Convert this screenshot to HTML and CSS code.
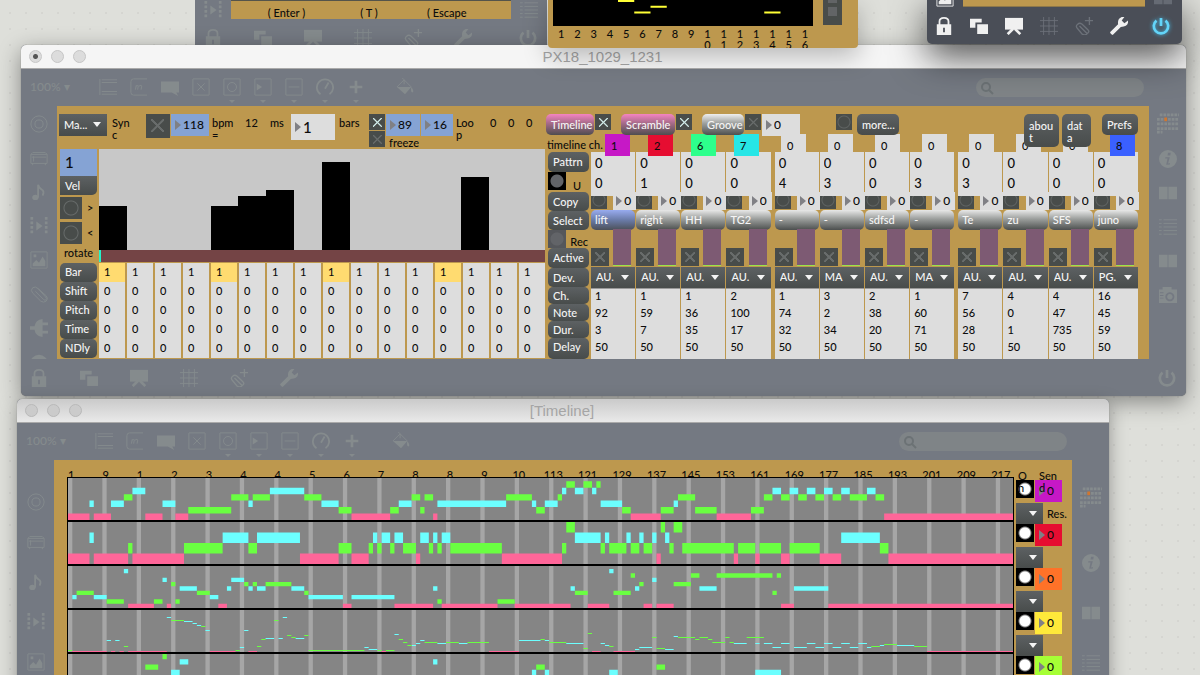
FILE: index.html
```html
<!DOCTYPE html>
<html lang="en">
<head>
<meta charset="utf-8">
<title>PX18_1029_1231</title>
<link rel="stylesheet" href="styles.css">
</head>
<body>
<svg class="sprite" aria-hidden="true">
  <symbol id="object" viewBox="0 0 20 20"><path d="M1 1v18M3 2h17M3 5h17M3 15h17M3 18h17"/></symbol>
  <symbol id="message" viewBox="0 0 20 20"><path d="M19 1H4Q1 1 1 4v12q0 3 3 3h15M6 13l1-5M7 9q3-2 2 1l-.5 3M10 9q3-2 3 0l-.7 4"/></symbol>
  <symbol id="comment" viewBox="0 0 20 20"><path class="solid" d="M0 4h20v12h-3l2 4-7-4H0z"/></symbol>
  <symbol id="toggle" viewBox="0 0 20 20"><path d="M1 1h18v18H1zM6 6l8 8M14 6l-8 8"/></symbol>
  <symbol id="bang" viewBox="0 0 20 20"><path d="M1 1h18v18H1z"/><circle cx="10" cy="10" r="5"/></symbol>
  <symbol id="number" viewBox="0 0 20 20"><path d="M1 1h18v18H1z"/><path class="solid" d="M3 6l6 4-6 4z"/></symbol>
  <symbol id="slider" viewBox="0 0 20 20"><path d="M1 1h18v18H1zM4 10h12"/></symbol>
  <symbol id="dial" viewBox="0 0 20 20"><path class="heavy" d="M5 18A9 9 0 1 1 15 18M10 12l4-7"/></symbol>
  <symbol id="plus" viewBox="0 0 20 20"><path class="bold" d="M10 3v14M3 10h14"/></symbol>
  <symbol id="bucket" viewBox="0 0 20 20"><path class="solid" d="M1 10h16l-7 8zM17 10q4 5 1 6-2 0-1-6z"/><path d="M1 10l8-8 8 8M9 2L7 0M9 2v5"/></symbol>
  <symbol id="target" viewBox="0 0 20 20"><circle cx="10" cy="10" r="9"/><circle cx="10" cy="10" r="4.500"/></symbol>
  <symbol id="drawer" viewBox="0 0 20 20"><path d="M1 6h18v10H1zM1 6l2-2h14l2 2M4 8v6M2 9h16M3 16v2M17 16v2"/></symbol>
  <symbol id="note" viewBox="0 0 20 20"><path class="heavy" d="M9 16V2q1 4 5 6 2 2 0 6"/><ellipse class="solid" cx="6" cy="16" rx="3.500" ry="3"/></symbol>
  <symbol id="film" viewBox="0 0 20 20"><path class="solid" d="M7 5l7 5-7 5z"/><path class="dash" d="M2 0v20M18 0v20"/></symbol>
  <symbol id="image" viewBox="0 0 20 20"><path d="M1 1h18v18H1z"/><path class="solid" d="M3 17v-3l4-4 3 3 4-7 3 5v6zM4 4h3v3H4z"/></symbol>
  <symbol id="clip" viewBox="0 0 20 20"><path d="M6 7l9 9q2 2 3 0 1-1-1-3L9 4Q6 1 3 3 0 6 3 9l9 9q3 2 6 0 3-3 0-6L9 4"/></symbol>
  <symbol id="plug" viewBox="0 0 20 20"><path class="solid" d="M14 0v20q-8-1-9-8H0V8h5q1-7 9-8zM14 4h6v3h-6zM14 13h6v3h-6z"/></symbol>
  <symbol id="dome" viewBox="0 0 20 20"><path class="solid" d="M0 12a10 10 0 0 1 20 0l-7 3v-6h-6v6z"/></symbol>
  <symbol id="lock" viewBox="0 0 20 20"><path class="heavy" d="M5 9V5q0-4 5-4t5 4v4"/><path class="solid" fill-rule="evenodd" d="M2 8h16v12H2zM9 12v5h2v-5z"/></symbol>
  <symbol id="layers" viewBox="0 0 20 20"><path class="solid" d="M0 2h13v4H6v6H0zM8 8h12v11H8z"/></symbol>
  <symbol id="easel" viewBox="0 0 20 20"><path class="solid" d="M0 1h20v13H0z"/><path class="bold" d="M9 13l-6 6M11 13l6 6"/></symbol>
  <symbol id="grid" viewBox="0 0 20 20"><path d="M4 0v20M10 0v20M16 0v20M0 4h20M0 10h20M0 16h20"/></symbol>
  <symbol id="clipadd" viewBox="0 0 20 20"><path class="mid" d="M5 10l7 7q2 2 3 0 1-1-1-3L8 8Q5 6 3 8 0 10 3 13l5 6q4 2 6-1M16 0v9M11 4h9"/></symbol>
  <symbol id="wrench" viewBox="0 0 20 20"><path class="solid" d="M0 17l9-9q-1-6 4-8h3l-3 4 3 3 4-3q1 7-8 7l-9 9q-2 0-3-3z"/></symbol>
  <symbol id="power" viewBox="0 0 20 20"><path class="bold" d="M10 1v9M5 4a8 8 0 1 0 10 0"/></symbol>
  <symbol id="keys" viewBox="0 0 24 22"><path class="cells" d="M3 2h21M0 7h24M0 12h24M0 17h24M0 21h6"/><path fill="#d0762f" class="hot" d="M8 5h3v4H8z"/></symbol>
  <symbol id="info" viewBox="0 0 20 20"><path class="solid" fill-rule="evenodd" d="M10 0a10 10 0 1 1 0 20 10 10 0 0 1 0-20zM10 3h3l-.5 3h-3zM7 8h5l-2 7 2-.5v1.500l-4 .5 1.500-7H7z"/></symbol>
  <symbol id="book" viewBox="0 0 20 20"><path class="solid" d="M0 3h9.500v14H0zM10.500 3H20v14h-9.500z"/></symbol>
  <symbol id="list" viewBox="0 0 20 20"><path d="M0 2h3M5 2h15M0 6h3M5 6h15M0 10h3M5 10h15M0 14h3M5 14h15M0 18h3M5 18h15"/></symbol>
  <symbol id="camera" viewBox="0 0 20 20"><path class="solid" fill-rule="evenodd" d="M0 4h4V1h10v3h6v15H0zM12 7a5 5 0 1 0 .1 0zM12 9a3 3 0 1 0 .1 0zM1 7v1h4V7zM1 10v1h4v-1zM1 13v1h4v-1z"/></symbol>
</svg>

<main class="desktop">
  <section class="win keys-win" aria-label="Keyboard shortcuts">
    <div class="keys-row">
      <div class="keys-side"><button class="icon" aria-label="Media"><svg><use href="#film"/></svg></button></div>
      <div class="keys-patch"><span>( Enter )</span><span>( T )</span><span>( Escape</span></div>
      <div class="keys-side"><button class="icon" aria-label="List"><svg><use href="#list"/></svg></button></div>
    </div>
    <div class="bottombar" data-bottom></div>
  </section>

  <section class="win px-win" aria-label="PX18_1029_1231">
    <header class="title title-light"><i class="light dot"></i><i class="light"></i><i class="light"></i><h1>PX18_1029_1231</h1></header>
    <div class="toolbar" data-toolbar></div>
    <div class="middle">
      <nav class="rail" data-rail="target drawer note film image clip plug dome"></nav>
      <div class="patch px-patch">
        <div class="left">
          <div class="topbar">
            <div class="pick pick-mode"><select aria-label="Mode"><option>Ma...</option></select></div>
            <span>Syn<br>c</span>
            <input type="checkbox" class="x x-24" aria-label="Sync">
            <label class="num blue w38"><input value="118" aria-label="Tempo"></label>
            <span>bpm<br>=</span><span>12</span><span>ms</span>
            <label class="num big"><input value="1" aria-label="Bars"></label>
            <span>bars</span>
            <div class="stack"><input type="checkbox" class="x" checked aria-label="Loop"><input type="checkbox" class="x" id="freeze"></div>
            <div class="loop">
              <label class="num blue"><input value="89" aria-label="Loop start"></label>
              <label class="num blue"><input value="16" aria-label="Loop length"></label>
              <label class="freeze" for="freeze">freeze</label>
            </div>
            <span>Loo<br>p</span><span>0</span><span>0</span><span>0</span>
          </div>
          <div class="sequencer">
            <div class="side">
              <input class="bank" value="1" aria-label="Bank">
              <button class="btn vel">Vel</button>
              <div class="rot"><button class="ring r22" aria-label="Rotate right"></button>&gt;</div>
              <div class="rot"><button class="ring r22" aria-label="Rotate left"></button>&lt;</div>
              <span class="rotate">rotate</span>
              <button class="btn">Bar</button><button class="btn">Shift</button><button class="btn">Pitch</button><button class="btn">Time</button><button class="btn">NDly</button>
            </div>
            <div class="steps">
              <div class="graph" id="graph"></div>
              <div class="progress"></div>
              <div class="cells" id="cells"></div>
            </div>
          </div>
        </div>
        <div class="right">
          <div class="modes">
            <button class="btn pink w48">Timeline</button><input type="checkbox" class="x" checked aria-label="Timeline on">
            <button class="btn pink w54">Scramble</button><input type="checkbox" class="x" checked aria-label="Scramble on">
            <button class="btn grey w42">Groove</button><input type="checkbox" class="x" aria-label="Groove on">
            <label class="num w38"><input value="0" aria-label="Groove amount"></label>
            <button class="ring r16" aria-label="Trigger"></button><button class="btn w42">more...</button>
            <div class="extras"><button class="btn tall w35">abou<br>t</button><button class="btn tall w29">dat<br>a</button><button class="btn w36">Prefs</button></div>
          </div>
          <div class="channels"><span class="chlabel">timeline ch.</span><div class="chs four" id="chA"></div><div class="chs eight" id="chB"></div></div>
          <div class="mixer">
            <div class="labels">
              <button class="btn">Pattrn</button>
              <div class="knobrow"><button class="knob on" aria-label="Update"></button><span>U</span></div>
              <button class="btn">Copy</button><button class="btn">Select</button>
              <div class="knobrow"><button class="knob" aria-label="Record"></button><span>Rec</span></div>
              <button class="btn">Active</button><button class="btn">Dev.</button><button class="btn">Ch.</button><button class="btn">Note</button><button class="btn">Dur.</button><button class="btn">Delay</button>
            </div>
            <div class="strips" id="strips"></div>
          </div>
        </div>
      </div>
      <nav class="rail right-rail" data-rail="keys info book list book camera"></nav>
    </div>
    <div class="bottombar" data-bottom></div>
  </section>

  <section class="win time-win" aria-label="Timeline">
    <header class="title title-dim"><i class="light"></i><i class="light"></i><i class="light"></i><h1>[Timeline]</h1></header>
    <div class="toolbar" data-toolbar></div>
    <div class="middle">
      <nav class="rail" data-rail="target drawer note film image clip"></nav>
      <div class="patch time-patch">
        <div class="score">
          <div class="ruler" id="ruler"></div>
          <div class="rows" id="rows"></div>
        </div>
        <div class="sends" id="sends"><span class="on-label">O<br>n</span><span class="send-label">Sen<br>d</span><span class="res-label">Res.</span></div>
      </div>
      <nav class="rail right-rail" data-rail="keys info book list"></nav>
    </div>
  </section>

  <section class="win groove-win" aria-label="Groove">
    <div class="groove-top"><svg class="groove-graph" viewBox="0 0 16 25" preserveAspectRatio="none"><path d="M4 1h1M5 12h1M6 6.500h1M13 12h1"/></svg><div class="groove-slots"></div></div>
    <div class="groove-nums" id="gnums"></div>
  </section>

  <section class="win dark-win" aria-label="Patcher">
    <div class="dark-row"><svg class="dark-icon"><use href="#image"/></svg><div class="dark-patch"></div><svg class="dark-icon dim"><use href="#book"/></svg></div>
    <div class="bottombar" data-bottom></div>
  </section>
</main>
<script src="script.js"></script>
</body>
</html>
```
FILE: styles.css
```css
* { box-sizing: border-box; }
body { margin: 0; background: #dedfda; font: 500 11px/12px Lato, "Open Sans", sans-serif; color: #0c0c0c; }
button, input, select { font: inherit; color: inherit; border: 0; margin: 0; padding: 0; border-radius: 0; background: none; min-width: 0; }
.sprite { position: absolute; width: 0; height: 0; }
.desktop {
  position: relative; height: 100vh; overflow: hidden;
  background: radial-gradient(circle at 10px 13px, #bfc0bb 0, transparent 1px) 0 0 / 16px 16px #dedfda;
}
.win { position: absolute; background: #747982; }

svg path, svg circle { fill: none; stroke: currentColor; stroke-width: 1; }
svg .solid { fill: currentColor; stroke: none; }
svg .mid { stroke-width: 1.500; }
svg .heavy { stroke-width: 2; }
svg .bold { stroke-width: 3; }
svg .dash { stroke-width: 3; stroke-dasharray: 3 2; }
svg .cells { stroke-width: 3; stroke-dasharray: 3 1; }
svg .hot { fill: #d0762f; stroke: none; }
.icon { display: block; width: 18px; height: 18px; color: #858b8d; flex: none; }
.icon svg { display: block; width: 100%; height: 100%; }

.title { display: flex; align-items: center; gap: 9px; height: 24px; padding-left: 8px; border-radius: 5px 5px 0 0; border-bottom: 1px solid #aaa; }
.title-light { background: #f5f5f5; }
.title-dim { background: linear-gradient(#cacaca, #e9e9e9); }
.title h1 { flex: 1; margin: 0 100px 0 0; padding-left: 24px; text-align: center; font: 15px/22px "Liberation Sans", Arial, sans-serif; color: #a5a5a5; }
.light { width: 13px; height: 13px; border-radius: 50%; background: #dcdcdc; border: 1px solid #c6c6c6; flex: none; }
.title-dim .light { background: #cbcbcb; border-color: #b9b9b9; }
.dot { background: radial-gradient(#555 0, #555 2px, #dcdcdc 3px); }

.toolbar { display: flex; align-items: center; height: 37px; padding: 0 42px 1px 9px; color: #858b8d; }
.zoom { width: 69px; font-size: 12px; }
.tools { display: flex; gap: 13px; flex: 1; }
.tool { position: relative; }
.tool.more::after { content: ""; position: absolute; left: 6px; bottom: -7px; border: 3px solid transparent; border-top-color: #848a8c; border-bottom: 0; }
.tool.last { margin-left: 18px; }
.search { position: relative; width: 168px; height: 19px; }
.search input { width: 100%; height: 100%; border-radius: 10px; background: #7f8487; display: block; }
.search svg { position: absolute; left: 4px; top: 3px; width: 14px; height: 14px; color: #6c7275; }

.middle { display: grid; grid-template-columns: 36px minmax(0, 1fr) 37px; }
.rail { display: flex; flex-direction: column; align-items: center; gap: 16px; padding-top: 9px; height: 253px; overflow: hidden; }
.right-rail { padding-top: 6px; }
.right-rail .icon:first-child { width: 22px; height: 22px; }
.bottombar { display: flex; align-items: center; gap: 32px; height: 37px; padding: 0 10px 0 9px; }
.bottombar .icon:last-child { margin-left: auto; }
.patch { background: #bd984e; }

/* shared controls */
.btn { display: block; padding: 0 0 0 5px; height: 20px; text-align: left; color: #f5f5f5; background: linear-gradient(#5d6163, #484c4b); border-radius: 5px; white-space: nowrap; flex: none; }
.pink { background: linear-gradient(#f584c1, #a46a88 45%, #4f4d50); }
.grey { background: linear-gradient(#efefef, #9c9f9d 45%, #4e504f); }
.tall { height: 33px; line-height: 12px; }
.w29 { width: 29px; } .w35 { width: 35px; } .w36 { width: 36px; } .w38 { width: 38px; } .w42 { width: 42px; } .w48 { width: 48px; } .w54 { width: 54px; }
.x { appearance: none; width: 16px; height: 16px; color: #686c6b; display: block; flex: none;
  background:
    linear-gradient(45deg, transparent 44%, currentColor 45%, currentColor 55%, transparent 56%) center / 56% 56% no-repeat,
    linear-gradient(-45deg, transparent 44%, currentColor 45%, currentColor 55%, transparent 56%) center / 56% 56% no-repeat,
    #484c4a; }
.x:checked { color: #cfe9e6; }
.x-24 { width: 24px; height: 24px; }
.ring { background: radial-gradient(circle, transparent 0, transparent 5px, #5f6362 6px, transparent 7px) #484c4a; flex: none; }
.r16 { width: 16px; height: 16px; }
.r22 { width: 22px; height: 22px; background: radial-gradient(circle, transparent 0, transparent 6px, #666a69 7px, transparent 8px) #484c4a; }
.num { display: flex; align-items: center; height: 22px; padding-left: 4px; background: #ddd; flex: none; }
.num::before { content: ""; border: 5px solid transparent; border-left: 6px solid #808085; border-right: 0; }
.num input { flex: 1; width: 0; padding: 0 0 1px 2px; font-size: 12px; }
.blue { background: #85a3d4; }
.big { width: 44px; height: 26px; }
.big input { font-size: 15px; }
.pick { position: relative; height: 21px; color: #f5f5f5; background: linear-gradient(#5d6163, #484c4b); }
.pick select { appearance: none; width: 100%; height: 100%; padding: 0 14px 1px 5px; overflow: hidden; display: block; }
.pick::after { content: ""; position: absolute; right: 6px; top: 8px; border: 4px solid transparent; border-top: 5px solid #f4f4f4; border-bottom: 0; pointer-events: none; }

/* main window */
.px-win { left: 21px; right: 14px; top: 45px; border-radius: 5px; box-shadow: 0 6px 22px rgba(0,0,0,.4), 0 0 1px #777; }
.px-patch { display: grid; grid-template-columns: 489fr 603fr; }
.topbar { display: grid; grid-template-columns: 53px 34px 25px 41px 33px 25px 21px 48px 30px 17px 70px 34px 18px 18px 20px; align-items: start; height: 43px; padding: 8px 0 0 2px; }
.topbar > span { padding-top: 3px; }
.pick-mode { width: 48px; height: 22px; }
.stack { display: grid; gap: 1px; }
.loop { display: grid; grid-template-columns: 34px 32px; gap: 1px; }
.freeze { grid-column: 1 / 3; padding-left: 3px; }
.sequencer { display: grid; grid-template-columns: 37px minmax(0, 1fr); gap: 2px; padding: 0 1px 0 3px; }
.side { display: flex; flex-direction: column; }
.bank { height: 27px; width: 100%; padding: 0 0 1px 5px; background: #85a3d4; font-size: 15px; }
.vel { height: 19px; border-radius: 0 0 5px 0; }
.rot { display: flex; gap: 5px; align-items: center; height: 25px; }
.rotate { height: 18px; padding: 0 0 0 4px; line-height: 16px; }
.side .btn:not(.vel) { height: 19px; padding-bottom: 1px; }
.steps { display: flex; flex-direction: column; }
.graph { display: grid; grid-template-columns: repeat(16, 1fr); align-items: end; height: 101px; background: #c8c8c8; }
.graph i { background: #000; }
.progress { height: 12px; background: #744445; border-left: 2px solid #25f3c9; }
.cells { display: grid; grid-template-columns: repeat(16, 1fr); gap: 0 2px; margin-top: 1px; }
.cells div { display: grid; grid-auto-rows: 19px; background: #ddd; }
.cells input { width: 100%; padding: 0 0 2px 5px; }
.cells .beat { background: #ffdb70; }

.modes { display: flex; align-items: flex-start; height: 28px; padding: 8px 11px 0 0; position: relative; z-index: 2; }
.modes .btn { height: 21px; }
.modes .x { margin: 0 10px 0 1px; }
.modes .grey + .x { margin-right: 1px; }
.modes .ring { margin: 0 5px 0 36px; }
.modes .extras { display: flex; gap: 3px; margin-left: auto; }
.modes .tall { height: 33px; padding-top: 2px; }
.extras .btn:last-child { margin-left: 8px; }
.channels { display: flex; height: 18px; position: relative; z-index: 1; }
.chlabel { width: 59px; padding: 5px 0 0 1px; white-space: nowrap; }
.chs { display: flex; }
.four { gap: 18px; } .eight { gap: 22px; margin-left: 22px; }
.chs input { width: 25px; height: 22px; padding-left: 6px; background: #ddd; }
.mixer { display: grid; grid-template-columns: 41px minmax(0, 1fr); gap: 2px; padding: 0 11px 0 2px; }
.labels { display: grid; grid-template-rows: 20px 20px 19px 19px 18px 20px 19px 17px 17px 17px 21px; }
.labels .btn { height: 100%; }
.labels .btn:last-child { padding-bottom: 3px; }
.knobrow { display: flex; align-items: flex-end; gap: 4px; }
.knobrow span { margin-left: auto; padding-right: 1px; }
.knobrow .on + span { padding-right: 8px; }
.knob { width: 18px; height: 18px; align-self: start; background: radial-gradient(circle, #626468 0, #626468 6px, #55575b 7px); }
.knob.on { background: radial-gradient(circle, #626468 0, #626468 6px, #000 7px); }
.strips { display: grid; grid-template-columns: repeat(3, minmax(0, 1fr)); gap: 4px; }
.group { display: grid; grid-template-columns: repeat(4, minmax(0, 1fr)); gap: 1px; }
.strip { display: flex; flex-direction: column; }
.pat { display: grid; grid-auto-rows: 20px; background: #ddd; font-size: 13px; }
.pat input, .vals input { width: 100%; padding-left: 4px; }
.pat input { padding-top: 2px; }
.vals input { padding-bottom: 3px; }
.copy { display: flex; justify-content: space-between; align-items: flex-end; height: 18px; background: linear-gradient(#ddd 4px, #bd984e 4px); margin-right: -1px; }
.copy .ring { width: 16px; height: 13px; margin-bottom: 1px; background-image: radial-gradient(circle at 8px 4px, transparent 0, transparent 5px, #5f6362 6px, transparent 7px); }
.copy .num { width: 23px; height: 18px; padding-left: 3px; }
.strip .btn { width: 100%; padding: 0 0 1px 4px; background: linear-gradient(#e8e8e8, #9b9e9c 45%, #4c4f4e); }
.strip .btn.sel { background: linear-gradient(#98abef, #6a7ba8 50%, #4c5058); }
.meter { display: flex; justify-content: space-between; align-items: flex-end; height: 37px; padding: 0 4px 1px 0; }
.meter .x { width: 18px; height: 18px; }
.meter i { width: 18px; height: 37px; background: #7d5a73; border-bottom: 1px solid #9be34a; }
.vals { display: grid; grid-auto-rows: 17px; align-content: start; height: 71px; background: #ddd; border-top: 1px solid #999; }

/* timeline window */
.time-win { left: 17px; right: 91px; top: 399px; bottom: -40px; border-radius: 5px; box-shadow: 0 6px 18px rgba(0,0,0,.35), 0 0 1px #777; }
.time-win .middle { grid-template-columns: 37px minmax(0, 1fr) 37px; }
.time-win .rail { gap: 22px; padding-top: 33px; height: auto; }
.time-win .right-rail { gap: 32px; padding-top: 26px; }
.time-win .right-rail .icon:first-child { margin-bottom: 14px; }
.time-patch { display: grid; grid-template-columns: minmax(0, 1fr) 58px; overflow: hidden; }
.score { padding-left: 13px; min-width: 0; }
.ruler { display: grid; grid-template-columns: repeat(28, minmax(0, 1fr)); height: 17px; padding-top: 9px; margin-left: -13px; margin-right: -4px; text-align: center; }
.rows { position: relative; border: 1px solid #000; border-bottom: 0; }
.rows svg { display: block; width: 100%; height: 44px; background: #858585; border-bottom: 2px solid #000; }
.rows svg path { stroke-width: 1; }
.rows svg .barline { fill: #a6a6a6; stroke: none; }
.rows svg .p { stroke: #ff6699; } .rows svg .g { stroke: #6aff42; } .rows svg .c { stroke: #6cffff; }
.sends { position: relative; padding: 20px 0 0 2px; }
.send { display: grid; grid-template-columns: 18px 27px; gap: 3px 1px; height: 44px; align-content: start; }
.send .lamp { width: 18px; height: 18px; background: radial-gradient(circle, #fff 0, #fff 5px, #000 7px); }
.send .num { height: 22px; }
.send .pick { width: 27px; height: 21px; margin-top: -2px; }
.on-label, .send-label, .res-label { position: absolute; z-index: 1; }
.on-label { left: 4px; top: 10px; }
.send-label { left: 25px; top: 10px; }
.res-label { left: 33px; top: 48px; }

/* windows at the top edge */
.keys-win { left: 195px; width: 352px; top: 0; }
.keys-row { display: grid; grid-template-columns: 36px 1fr 36px; height: 19px; }
.keys-side { display: grid; place-items: center; }
.keys-patch { display: grid; grid-template-columns: 111px 54px 1fr; background: #bd984e; text-align: center; padding-top: 6px; border-top: 1px solid #55544a; }
.keys-patch span:last-child { text-align: left; padding-left: 31px; }
.groove-win { left: 548px; width: 310px; top: 0; overflow: hidden; background: #bd984e; border-radius: 0 0 4px 4px; box-shadow: 0 8px 24px rgba(0,0,0,.25); height: 48px; }
.groove-top { display: grid; grid-template-columns: 260px 19px; gap: 10px; padding-left: 5px; }
.groove-graph { width: 100%; height: 26px; background: #000; }
.groove-graph path { stroke: #ffff35; stroke-width: 2; }
.groove-slots { height: 25px; background: linear-gradient(transparent 3px, #484c4a 3px, #484c4a 7px, transparent 7px) center 0 / 9px 100% no-repeat, linear-gradient(#626466 16px, transparent 16px) center 0 / 9px 100% no-repeat, #484c4a; }
.groove-nums { display: grid; grid-template-columns: repeat(16, 1fr); width: 260px; margin-left: 5px; padding-top: 2px; text-align: center; line-height: 11px; }
.dark-win { left: 927px; right: 18px; top: 0; background: #4a4e57; border-radius: 0 0 5px 5px; box-shadow: 0 12px 36px rgba(0,0,0,.7); }
.dark-row { display: grid; grid-template-columns: 18px 1fr 18px; gap: 9px; height: 7px; padding: 0 10px 0 9px; overflow: hidden; }
.dark-icon { width: 18px; height: 18px; margin-top: -11px; color: #ededed; }
.dim { color: #666b74; }
.dark-patch { background: #bd984e; border-bottom: 1px solid #8e784a; }
.dark-win .bottombar { gap: 17px; padding: 0 12px 0 8px; }
.dark-win .icon { color: #f0f0f0; }
.dark-win .icon:nth-child(4), .dark-win .icon:nth-child(5) { color: #6c7179; }
.dark-win .icon:last-child { color: #63d4f8; filter: drop-shadow(0 0 2px #43b5df); }
```
FILE: script.js
```js
const $ = (id) => document.getElementById(id);
const icon = (name, cls = '') =>
  `<button class="icon ${cls}" aria-label="${name}"><svg><use href="#${name}"/></svg></button>`;

document.querySelectorAll('[data-rail]').forEach((el) => {
  el.innerHTML = el.dataset.rail.split(' ').map((n) => icon(n)).join('');
});
document.querySelectorAll('[data-bottom]').forEach((el) => {
  el.innerHTML = ['lock', 'layers', 'easel', 'grid', 'clipadd', 'wrench', 'power'].map((n) => icon(n)).join('');
});
document.querySelectorAll('[data-toolbar]').forEach((el) => {
  const plain = ['object', 'message', 'comment', 'toggle'].map((n) => icon(n, 'tool'));
  const more = ['bang', 'number', 'slider', 'dial', 'plus'].map((n) => icon(n, 'tool more'));
  el.innerHTML = `<span class="zoom">100% ▾</span><div class="tools">${plain.join('')}${more.join('')}${icon('bucket', 'tool last')}</div>
    <div class="search"><input type="text" aria-label="Search"><svg viewBox="0 0 14 14"><circle class="heavy" cx="6" cy="6" r="4"/><path class="heavy" d="M9 9l4 4"/></svg></div>`;
});

/* step sequencer */
const heights = [44, 0, 0, 0, 44, 54, 60, 0, 88, 0, 0, 0, 0, 73, 0, 0];
$('graph').innerHTML = heights.map((h) => `<i style="height:${h}px"></i>`).join('');
$('cells').innerHTML = heights.map((_, i) => '<div>' + ['Bar', 'Shift', 'Pitch', 'Time', 'NDly'].map((n, r) =>
  `<input class="${r === 0 && i % 4 === 0 ? 'beat' : ''}" value="${r === 0 ? 1 : 0}" aria-label="${n} ${i + 1}">`).join('') + '</div>').join('');

/* timeline channel numbers */
const ch = (v, c, i) => `<input value="${v}" aria-label="Timeline channel ${i}" style="${c ? 'background:' + c : ''}">`;
$('chA').innerHTML = ch(1, '#c618c6', 1) + ch(2, '#e60d31', 2) + ch(6, '#2dff8c', 3) + ch(7, '#27e6e6', 4);
$('chB').innerHTML = [5, 6, 7, 8, 9, 10, 11].map((i) => ch(0, '', i)).join('') + ch(8, '#3a60ff', 12);

/* channel strips: name, pattern value, device, ch, note, dur, delay */
const strips = [
  ['lift', 0, 'AU.', 1, 92, 3, 50], ['right', 1, 'AU.', 1, 59, 7, 50], ['HH', 0, 'AU.', 1, 36, 35, 50], ['TG2', 0, 'AU.', 2, 100, 17, 50],
  ['-', 4, 'AU.', 1, 74, 32, 50], ['-', 3, 'MA', 3, 2, 34, 50], ['sdfsd', 0, 'AU.', 2, 38, 20, 50], ['-', 3, 'MA', 1, 60, 71, 50],
  ['Te', 3, 'AU.', 7, 56, 28, 50], ['zu', 0, 'AU.', 4, 0, 1, 50], ['SFS', 0, 'AU.', 4, 47, 735, 50], ['juno', 0, 'PG.', 16, 45, 59, 50]];
const strip = ([name, pat, dev, ...vals], i) => `<div class="strip">
  <div class="pat"><input value="0" aria-label="Pattern ${i}"><input value="${pat}" aria-label="Variation ${i}"></div>
  <div class="copy"><button class="ring" aria-label="Copy ${i}"></button><label class="num"><input value="0" aria-label="Copy to ${i}"></label></div>
  <button class="btn ${i === 1 ? 'sel' : ''}">${name}</button>
  <div class="meter"><input type="checkbox" class="x" aria-label="Active ${i}"><i></i></div>
  <div class="pick"><select aria-label="Device ${i}"><option>${dev}</option></select></div>
  <div class="vals">${vals.map((v, k) => `<input value="${v}" aria-label="${['Channel', 'Note', 'Duration', 'Delay'][k]} ${i}">`).join('')}</div>
</div>`;
$('strips').innerHTML = [0, 4, 8].map((s) =>
  `<div class="group">${strips.slice(s, s + 4).map((d, k) => strip(d, s + k + 1)).join('')}</div>`).join('');

/* timeline rows: each entry is colour + level, then start,length pairs in beats */
const rows = [
  [6.5, {
    p0: '0,5 6,4 18,4 25,3 66,9 85,1 131,7 151,8 190,30',
    c2: '5,1 10,3 22,3 42,1 59,4 77,3 86,16 108,1 111,3 124,5 141,1',
    c4: '15,3 47,8 115,1 118,2 122,1 164,2 168,2 172,2 176,2 180,2 186,2',
    g3: '13,2 38,4 43,4 55,4 80,2 83,2 102,6 114,1 142,4 162,2 166,2 170,2 174,2 178,2 182,4 188,2',
    g1: '28,10 63,3 75,2 82,1 109,2 129,2 138,3 146,5 159,3',
    g5: '116,2 120,2 123,1' }],
  [4, {
    p0: '0,5 6,8 15,12 54,9 66,4 81,1 101,14 137,1 155,1 160,1 166,2 175,5 191,29',
    g1: '14,1 27,9 42,2 63,3 70,1 72,1 75,1 78,3 84,1 86,1 89,12 115,1 124,1 126,4 131,2 134,2 140,1 143,12 156,4 161,5 168,7 189,2',
    c2: '5,1 36,6 44,10 71,1 73,2 76,2 82,2 85,1 87,2 118,6 125,1 130,1 133,1 136,1 139,1 180,9',
    g3: '116,2 138,1 141,2' }],
  [9.7, {
    p0: '14,6 23,1 35,2 64,2 76,9 87,13 104,13 121,5 134,2 137,4 166,3 177,43',
    g1: '9,4 20,2 25,1 86,1 100,4',
    c2: '1,1 6,3 33,2 56,8 66,10',
    g3: '2,4 30,3 55,1 118,3 127,4 164,1',
    c4: '26,4 37,1 42,1 44,2 52,3 85,1 117,1 132,1 147,4 169,8',
    g5: '24,1 41,1 43,1 46,6 133,1 141,4',
    c6: '22,1 38,3 136,1',
    g7: '131,1 145,2 151,13 165,1',
    c8: '13,1 126,1' }],
  [42, {
    p0: '1,8 10,1 12,1 14,9 33,6 42,2 73,1 98,7 122,2 127,5 200,20',
    g1: '0,1 39,1 56,13 72,1 74,2', c2: '70,2 132,1 139,2', g3: '120,1 137,2',
    c4: '40,1 69,1 133,3 164,2 169,3 174,2 178,2 182,2 186,1',
    g5: '13,1 44,1 126,1 187,2 197,3', c6: '80,1 125,1 189,1 193,4', g6: '79,1', g7: '190,3',
    c8: '81,1 86,2 91,2 116,4 124,1 155,3 160,1 162,2 166,2 172,2 176,2 180,2 184,2',
    g9: '78,1 83,3 88,3 93,5 112,4 150,3 154,1',
    c11: '9,1 11,1 82,1 105,5 111,1', g12: '45,1 77,1 110,1 146,1 149,1',
    c13: '46,2 49,1 53,2', g14: '52,1 136,1 142,4 147,2 153,1 158,4', c15: '141,1', g16: '51,1 55,1',
    c17: '76,1', g18: '121,1', c21: '32,1 41,1', g25: '31,1', c26: '30,1', c28: '29,1', c30: '27,2',
    g31: '24,3 48,1', c34: '23,1 50,1' }],
  [8, {
    g7: '22,1', c6: '26,2 85,1', g5: '18,3 109,2 137,2', c4: '24,2 108,1 111,1 126,2 160,6' }]];
$('rows').innerHTML = rows.map(([levels, notes]) => {
  const bars = Array.from({ length: 28 }, (_, k) => `M${k * 8} 0h1v${levels}h-1z`).join('');
  const paths = Object.entries(notes).map(([key, list]) => {
    const y = levels - Number(key.slice(1)) - 0.5;
    return `<path class="${key[0]}" d="${list.split(' ').map((n) => n.split(',')).map(([x, w]) => `M${x} ${y}h${w}`).join('')}"/>`;
  });
  return `<svg viewBox="0 0 220 ${levels}" preserveAspectRatio="none"><path class="barline" d="${bars}"/>${paths.join('')}</svg>`;
}).join('');

const marks = [1, 9, 1, 2, 3, 4, 4, 5, 6, 7, 8, 8, 9, 10, 113, 121, 129, 137, 145, 153, 161, 169, 177, 185, 193, 201, 209, 217];
$('ruler').innerHTML = marks.map((m) => `<span>${m}</span>`).join('');

$('sends').insertAdjacentHTML('beforeend', ['#c618c6', '#e60d31', '#ff7228', '#ffe93a', '#a6ff35'].map((c, i) => `<div class="send">
  <button class="lamp" aria-label="On ${i + 1}"></button><label class="num" style="background:${c}"><input value="0" aria-label="Send ${i + 1}"></label>
  <div class="pick"><select aria-label="Resolution ${i + 1}"><option></option></select></div></div>`).join(''));

$('gnums').innerHTML = Array.from({ length: 16 }, (_, i) => `<span>${String(i + 1).split('').join('<br>')}</span>`).join('');
```
